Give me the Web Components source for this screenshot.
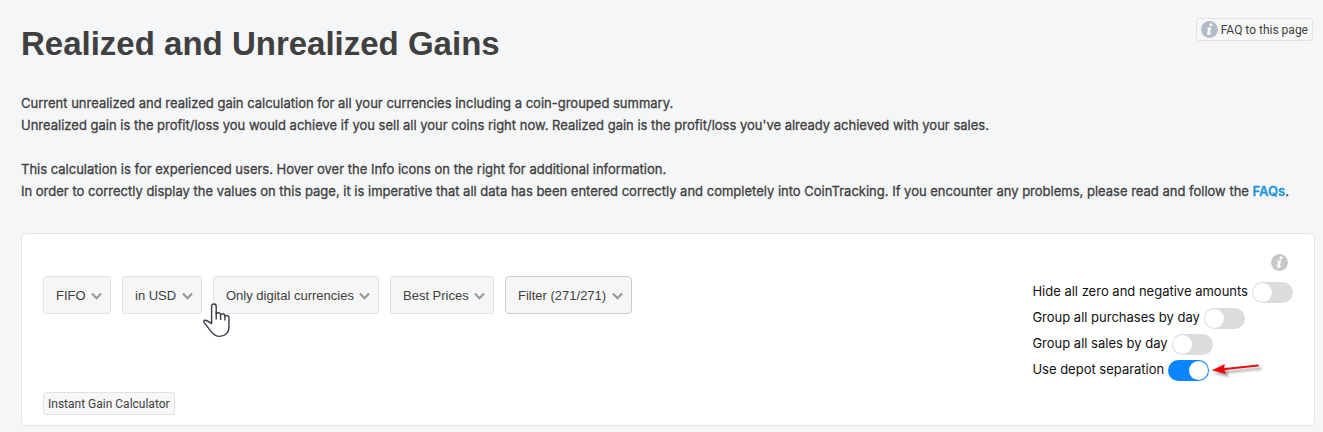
<!DOCTYPE html>
<html lang="en">
<head>
<meta charset="utf-8">
<title>Realized and Unrealized Gains</title>
<style>
    body {
        margin: 0;
        background: #f5f6f8;
        color: #404040;
        font-family: "Liberation Sans", Arial, sans-serif;
        font-size: 13px;
    }
</style>
</head>
<body>
<gains-page>
    <page-header slot="header">
        Realized and Unrealized Gains
        <small-button slot="action" icon>FAQ to this page</small-button>
    </page-header>
    <page-intro slot="intro">
        <p>Current unrealized and realized gain calculation for all your currencies including a coin-grouped summary.<br>
        Unrealized gain is the profit/loss you would achieve if you sell all your coins right now. Realized gain is the profit/loss you've already achieved with your sales.</p>
        <p>This calculation is for experienced users. Hover over the Info icons on the right for additional information.<br>
        In order to correctly display the values on this page, it is imperative that all data has been entered correctly and completely into CoinTracking. If you encounter any problems, please read and follow the <a href="#faqs">FAQs</a>.</p>
    </page-intro>
    <filter-card>
        <drop-down slot="filters" label="Method" value="FIFO"></drop-down>
        <drop-down slot="filters" label="Currency" value="in USD"></drop-down>
        <drop-down slot="filters" label="Coins" value="Only digital currencies"></drop-down>
        <drop-down slot="filters" label="Prices" value="Best Prices"></drop-down>
        <drop-down slot="filters" label="Filter" value="Filter (271/271)" outlined></drop-down>
        <small-button slot="action">Instant Gain Calculator</small-button>
        <info-icon slot="options"></info-icon>
        <toggle-option slot="options">Hide all zero and negative amounts</toggle-option>
        <toggle-option slot="options">Group all purchases by day</toggle-option>
        <toggle-option slot="options">Group all sales by day</toggle-option>
        <toggle-option slot="options" checked>Use depot separation<red-arrow slot="after"></red-arrow></toggle-option>
        <hand-pointer slot="pointer"></hand-pointer>
    </filter-card>
</gains-page>

<script>
class GainsPage extends HTMLElement {
    connectedCallback() {
        const shadowRoot = this.attachShadow({ mode: 'open' });
        shadowRoot.innerHTML = `
            <style>
                :host {
                    display: block;
                    padding: 18px 8px 6px 21px;
                }
                main {
                    display: flex;
                    flex-direction: column;
                }
            </style>
            <main>
                <slot name="header"></slot>
                <slot name="intro"></slot>
                <slot></slot>
            </main>
        `;
    }
}

customElements.define("gains-page", GainsPage);

class PageHeader extends HTMLElement {
    connectedCallback() {
        const shadowRoot = this.attachShadow({ mode: 'open' });
        shadowRoot.innerHTML = `
            <style>
                :host {
                    display: block;
                }
                header {
                    display: flex;
                    justify-content: space-between;
                    align-items: flex-start;
                    padding-right: 2px;
                }
                h1 {
                    margin: 4px 0 0;
                    font-size: 33px;
                    line-height: 44px;
                    font-weight: bold;
                }
            </style>
            <header>
                <h1><slot></slot></h1>
                <slot name="action"></slot>
            </header>
        `;
    }
}

customElements.define("page-header", PageHeader);

class PageIntro extends HTMLElement {
    connectedCallback() {
        const shadowRoot = this.attachShadow({ mode: 'open' });
        shadowRoot.innerHTML = `
            <style>
                :host {
                    display: block;
                    padding: 26px 0 31px;
                    font-family: Inter, "Liberation Sans", sans-serif;
                    line-height: 22px;
                    -webkit-text-stroke: 0.3px currentColor;
                }
                ::slotted(p) {
                    margin: 0 0 22px;
                }
                ::slotted(p:last-of-type) {
                    margin-bottom: 0;
                }
            </style>
            <slot></slot>
        `;
        // links sit too deep for ::slotted, so they are coloured here
        this.querySelectorAll('a').forEach((link) => {
            link.style.color = '#1f97e0';
            link.style.fontWeight = '600';
            link.style.textDecoration = 'none';
        });
    }
}

customElements.define("page-intro", PageIntro);

class InfoIcon extends HTMLElement {
    connectedCallback() {
        const shadowRoot = this.attachShadow({ mode: 'open' });
        shadowRoot.innerHTML = `
            <style>
                :host {
                    display: block;
                    color: #c8c8c8;
                }
                svg {
                    display: block;
                }
            </style>
            <svg width="17" height="17" viewBox="0 0 17 17" aria-hidden="true">
                <circle cx="8.5" cy="8.5" r="8.4" fill="currentColor"/>
                <circle cx="9.9" cy="3.8" r="1.5" fill="#fff"/>
                <path d="M6 6.8 L10.2 6.3 L8.8 12 Q8.8 12.8 10.4 11.6 L10.6 12.1 Q9 14 7.4 14 Q5.7 13.9 6.2 12 L7.2 8 Q7.3 7.4 6 7.4 Z" fill="#fff"/>
            </svg>
        `;
    }
}

customElements.define("info-icon", InfoIcon);

class SmallButton extends HTMLElement {
    connectedCallback() {
        const shadowRoot = this.attachShadow({ mode: 'open' });
        const icon = this.hasAttribute('icon') ? '<info-icon></info-icon>' : '';
        shadowRoot.innerHTML = `
            <style>
                :host {
                    display: inline-block;
                }
                button {
                    display: flex;
                    align-items: center;
                    gap: 3px;
                    height: 23px;
                    padding: 0 4px;
                    background: #f7f7f7;
                    border: 1px solid #e2e2e2;
                    border-radius: 3px;
                    color: #404040;
                    font-family: Roboto, sans-serif;
                    font-size: 12px;
                    white-space: nowrap;
                    cursor: pointer;
                }
                info-icon {
                    color: #b1bac6;
                }
            </style>
            <button type="button">${icon}<slot></slot></button>
        `;
    }
}

customElements.define("small-button", SmallButton);

class FilterCard extends HTMLElement {
    connectedCallback() {
        const shadowRoot = this.attachShadow({ mode: 'open' });
        shadowRoot.innerHTML = `
            <style>
                :host {
                    display: block;
                }
                section {
                    position: relative;
                    display: flex;
                    justify-content: space-between;
                    gap: 20px;
                    padding: 20px 21px 10px;
                    background: #fff;
                    border: 1px solid #e4e5e7;
                    border-radius: 5px;
                }
                .left {
                    display: flex;
                    flex-direction: column;
                    justify-content: space-between;
                    align-items: flex-start;
                    padding-top: 22px;
                }
                .filters {
                    display: flex;
                    flex-wrap: wrap;
                    gap: 11px;
                }
                .options {
                    display: flex;
                    flex-direction: column;
                    padding-bottom: 32px;
                }
                ::slotted(info-icon) {
                    align-self: flex-end;
                    margin: 0 5px 8px 0;
                }
                ::slotted(hand-pointer) {
                    position: absolute;
                    left: 181px;
                    top: 69px;
                }
            </style>
            <section>
                <div class="left">
                    <div class="filters"><slot name="filters"></slot></div>
                    <slot name="action"></slot>
                </div>
                <div class="options"><slot name="options"></slot></div>
                <slot name="pointer"></slot>
            </section>
        `;
    }
}

customElements.define("filter-card", FilterCard);

class DropDown extends HTMLElement {
    connectedCallback() {
        const shadowRoot = this.attachShadow({ mode: 'open' });
        shadowRoot.innerHTML = `
            <style>
                :host {
                    display: inline-grid;
                    align-items: center;
                }
                select, svg {
                    grid-area: 1 / 1;
                }
                select {
                    appearance: none;
                    height: 38px;
                    margin: 0;
                    padding: 0 24px 0 12px;
                    background: #f6f6f6;
                    border: 1px solid #e2e2e2;
                    border-radius: 3px;
                    color: #404040;
                    font: inherit;
                    cursor: pointer;
                }
                :host([outlined]) select {
                    border-color: #ccc;
                    border-radius: 4px;
                }
                svg {
                    justify-self: end;
                    margin: 2px 9px 0 0;
                    pointer-events: none;
                }
            </style>
            <select aria-label="${this.getAttribute('label')}">
                <option>${this.getAttribute('value')}</option>
            </select>
            <svg width="11" height="8" viewBox="0 0 11 8" aria-hidden="true">
                <path d="M1 1.4 L5.5 6.2 L10 1.4" fill="none" stroke="#999" stroke-width="2.2"/>
            </svg>
        `;
    }
}

customElements.define("drop-down", DropDown);

class ToggleOption extends HTMLElement {
    connectedCallback() {
        const shadowRoot = this.attachShadow({ mode: 'open' });
        shadowRoot.innerHTML = `
            <style>
                :host {
                    display: flex;
                    align-items: center;
                    height: 26px;
                    color: #111;
                    font-family: Inter, "Liberation Sans", sans-serif;
                    font-size: 13px;
                    white-space: nowrap;
                }
                label {
                    display: flex;
                    align-items: center;
                    gap: 4px;
                }
                span {
                    padding-bottom: 3px;
                }
                input {
                    appearance: none;
                    box-sizing: border-box;
                    width: 41px;
                    height: 21px;
                    margin: 0;
                    padding: 1px;
                    display: flex;
                    background: #dcdcdc;
                    border-radius: 11px;
                    cursor: pointer;
                }
                input::before {
                    content: "";
                    width: 19px;
                    height: 19px;
                    background: #fff;
                    border-radius: 50%;
                }
                input:checked {
                    justify-content: flex-end;
                    background: #0a84ff;
                }
            </style>
            <label>
                <span><slot></slot></span>
                <input type="checkbox" ${this.hasAttribute('checked') ? 'checked' : ''}>
            </label>
            <slot name="after"></slot>
        `;
    }
}

customElements.define("toggle-option", ToggleOption);

class RedArrow extends HTMLElement {
    connectedCallback() {
        const shadowRoot = this.attachShadow({ mode: 'open' });
        shadowRoot.innerHTML = `
            <style>
                :host {
                    display: block;
                    margin-left: 3px;
                }
                svg {
                    display: block;
                    filter: drop-shadow(3px 3px 1px rgba(0, 0, 0, 0.35));
                }
            </style>
            <svg width="50" height="18" viewBox="0 0 50 18" aria-hidden="true">
                <path d="M11 8.2 L46 4.4" stroke="#e60f0f" stroke-width="2" stroke-linecap="round"/>
                <path d="M0.5 9.2 L12.4 3.6 L11.8 8 L13.4 12.6 Z" fill="#f00808" stroke="#f00808" stroke-width="0.6"/>
            </svg>
        `;
    }
}

customElements.define("red-arrow", RedArrow);

class HandPointer extends HTMLElement {
    connectedCallback() {
        const shadowRoot = this.attachShadow({ mode: 'open' });
        shadowRoot.innerHTML = `
            <style>
                :host {
                    display: block;
                    pointer-events: none;
                }
                svg {
                    display: block;
                }
            </style>
            <svg width="28" height="35" viewBox="0 0 28 35" aria-hidden="true">
                <path d="M8.6 20.6 V3.4 Q8.6 1 10.9 1 Q13.2 1 13.2 3.4 V10.5 Q17 8.6 17.6 11.6 Q21.2 9.8 21.9 12.8 Q26 11.6 26 15.4 V23 C26 30 22 33.4 16.6 33.4 C12.6 33.4 10.4 31.6 8 28.4 L1.2 19.6 Q0 17.4 2.2 17.2 Q4.4 17.4 8.6 20.6 Z" fill="#fff" stroke="#3a3a48" stroke-width="1.4" stroke-linejoin="round"/>
                <path d="M13.2 10 V16 M17.6 11.4 V16.4 M21.9 12.6 V17" fill="none" stroke="#3a3a48" stroke-width="1.4" stroke-linecap="round"/>
            </svg>
        `;
    }
}

customElements.define("hand-pointer", HandPointer);
</script>
</body>
</html>
